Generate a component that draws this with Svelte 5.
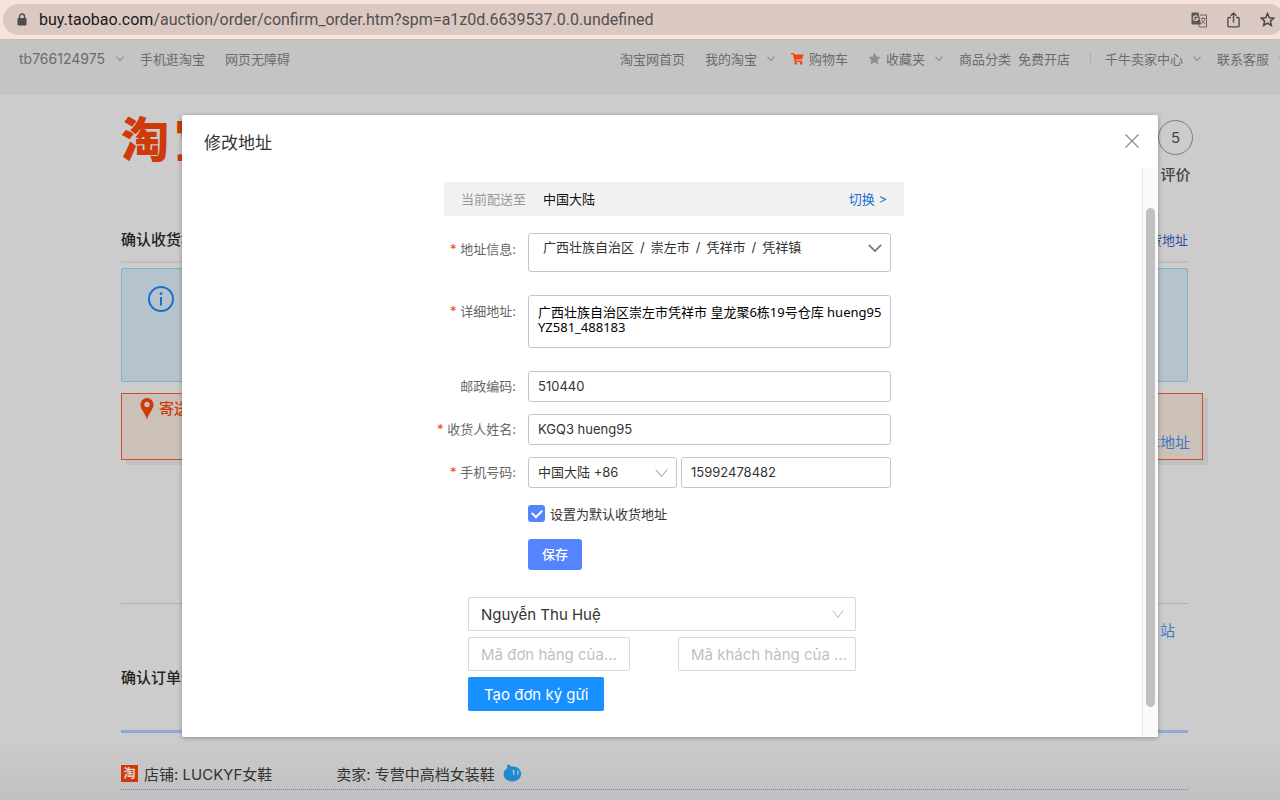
<script>
  let region = 'pingxiang';
  let detail = '广西壮族自治区崇左市凭祥市 皇龙聚6栋19号仓库 hueng95 YZ581_488183';
  let zip = '510440';
  let receiver = 'KGQ3 hueng95';
  let areaCode = '86';
  let phone = '15992478482';
  let isDefault = true;
  let staff = 'hue';
  let orderCode = '';
  let customerCode = '';

  let open = true;

  const accountLinks = [
    { label: 'tb766124975', menu: true, account: true },
    { label: '手机逛淘宝' },
    { label: '网页无障碍' }
  ];

  const siteLinks = [
    { label: '淘宝网首页' },
    { label: '我的淘宝', menu: true },
    { label: '购物车', icon: 'cart' },
    { label: '收藏夹', icon: 'star', menu: true },
    { label: '商品分类' },
    { label: '免费开店', tight: true },
    { label: '千牛卖家中心', menu: true, divider: true },
    { label: '联系客服', menu: true }
  ];
</script>

{#snippet chevron(cls)}
  <svg class={cls} viewBox="0 0 16 9" preserveAspectRatio="none" fill="none" stroke="currentColor" aria-hidden="true">
    <path d="M1 1l7 7 7-7" />
  </svg>
{/snippet}

{#snippet navItem(item)}
  {#if item.divider}<i class="divider"></i>{/if}
  <a href="#nav" class:tight={item.tight} class:account={item.account}>
    {#if item.icon === 'cart'}
      <svg class="cart" viewBox="0 0 13 13" aria-hidden="true">
        <path d="M0 1h2.800l.6 1.600H12.500l-1.400 5H4.600l.3 1.100h6.400v1.300H3.700L1.900 2.300H0z" fill="#f4430c" />
        <circle cx="4.700" cy="11.400" r="1.300" fill="#f4430c" />
        <circle cx="10.200" cy="11.400" r="1.300" fill="#f4430c" />
      </svg>
    {:else if item.icon === 'star'}
      <svg class="fav" viewBox="0 0 13 13" aria-hidden="true">
        <path d="M6.500.5l1.900 4 4.300.6-3.100 3 .8 4.300-3.900-2.100-3.900 2.100.8-4.300-3.100-3 4.300-.6z" fill="#8f8f8f" />
      </svg>
    {/if}
    {item.label}
    {#if item.menu}{@render chevron('nav-chevron')}{/if}
  </a>
{/snippet}

<div class="page">
  <div class="browser">
    <div class="address-bar">
      <svg class="lock" viewBox="0 0 10 13" aria-hidden="true">
        <path d="M2.500 6V3.500a2.500 2.500 0 0 1 5 0V6" fill="none" stroke="#4b4b50" stroke-width="1.400" />
        <rect x=".5" y="5" width="9" height="7.500" rx="1.200" fill="#4b4b50" />
      </svg>
      <span class="url"><b>buy.taobao.com</b>/auction/order/confirm_order.htm?spm=a1z0d.6639537.0.0.undefined</span>
      <span class="tools">
        <svg width="16" height="16" viewBox="0 0 16 16" fill="none" aria-hidden="true">
          <path d="M9 3h6.500v12H8.500l-1-3" stroke="#6a6260" />
          <path d="M1 .5h6.500L10 12.500H1A1 1 0 0 1 .5 12V1A1 1 0 0 1 1 .5z" fill="#5d5756" />
          <path d="M6.600 4.700A2.300 2.300 0 1 0 7 6.600H5" stroke="#ddcdc7" stroke-width="1.200" />
          <path d="M9.800 6.500h4.700M12 5.300v1.200M13.700 6.700c-.4 2.400-1.600 4-3.400 5M10.500 7.500c.6 1.900 1.900 3.200 3.700 4" stroke="#6a6260" stroke-width=".9" />
        </svg>
        <svg width="13" height="16" viewBox="0 0 13 16" fill="none" stroke="#504a49" stroke-width="1.400" stroke-linejoin="round" aria-hidden="true">
          <path d="M4 5.500H2A1.200 1.200 0 0 0 .9 6.700v7A1.200 1.200 0 0 0 2 14.900h9a1.200 1.200 0 0 0 1.100-1.200v-7A1.200 1.200 0 0 0 11 5.500H9M6.500 10.500V1.200M3.600 3.800l2.900-2.900 2.900 2.900" />
        </svg>
        <svg width="15" height="15" viewBox="0 0 15 15" fill="none" stroke="#4a4444" stroke-width="1.500" aria-hidden="true">
          <path d="M7.500 1.500l1.800 4.200 4.500.4-3.400 3 1 4.400-3.900-2.300-3.900 2.300 1-4.400-3.400-3 4.500-.4z" />
        </svg>
      </span>
    </div>
  </div>

  <nav class="site-nav">
    <div class="nav-group">
      {#each accountLinks as item}{@render navItem(item)}{/each}
    </div>
    <div class="nav-group site">
      {#each siteLinks as item}{@render navItem(item)}{/each}
    </div>
  </nav>

  <main>
    <header class="masthead">
      <div class="logo"><span>淘</span><span>宝</span></div>
      <div class="step">
        <span class="step-no">5</span>
        <span>评价</span>
      </div>
    </header>

    <div class="section-head">
      <h2>确认收货地址</h2>
      <a href="#manage">管理收货地址</a>
    </div>

    <div class="notice">
      <svg width="28" height="28" viewBox="0 0 28 28" fill="none" aria-hidden="true">
        <circle cx="14" cy="14" r="12" stroke="#1a6fd0" stroke-width="2" />
        <circle cx="14" cy="8.700" r="1.400" fill="#1a6fd0" />
        <path d="M14 12v8.500" stroke="#1a6fd0" stroke-width="2" />
      </svg>
    </div>

    <div class="ship-to">
      <div class="ship-label">
        <svg width="14" height="22" viewBox="0 0 14 22" aria-hidden="true">
          <path fill="#cf3a0a" fill-rule="evenodd" d="M7 0a6.600 6.600 0 0 1 6.600 6.600C13.600 11 9 15 7 21.500 5 15 .4 11 .4 6.600A6.600 6.600 0 0 1 7 0zm0 3.800a2.700 2.700 0 1 0 0 5.400 2.700 2.700 0 0 0 0-5.400z" />
        </svg>
        寄送至
      </div>
      <a href="#edit">修改本地址</a>
    </div>

    <div class="station"><a href="#station">站</a></div>

    <h2 class="order-head">确认订单信息</h2>

    <div class="shop">
      <span class="badge">淘</span>
      <span class="shop-name">店铺: LUCKYF女鞋</span>
      <span>卖家: 专营中高档女装鞋</span>
      <svg class="wangwang" width="19" height="18" viewBox="0 0 19 18" aria-hidden="true">
        <path d="M4.500.5c1.600.3 2.900 1 4 2 5-.7 9.700 2.600 9.700 7.300 0 4.400-3.900 7.700-8.900 7.700S.6 14.300.6 10.300c0-2.700 1.400-4.800 3.700-6.200C4 3 4 1.500 4.500.5z" fill="#2389cf" />
        <path d="M9.500 7l1.200-.3v4.200M14.400 6.800c1 .9 1 2.700 0 3.700" fill="none" stroke="#a9cbe0" stroke-width="1.300" />
      </svg>
    </div>
  </main>
</div>

{#if open}
  <div class="modal" role="dialog" aria-modal="true" aria-labelledby="modal-title">
    <header class="modal-head">
      <h1 id="modal-title">修改地址</h1>
      <button type="button" class="close" aria-label="关闭" on:click={() => (open = false)}>
        <svg width="14" height="14" viewBox="0 0 14 14" stroke="#8c8c8c" stroke-width="1.200" aria-hidden="true">
          <path d="M.5.5l13 13M13.500.5l-13 13" />
        </svg>
      </button>
    </header>

    <div class="modal-body">
      <div class="modal-content">
        <form class="address" on:submit|preventDefault>
          <div class="current">
            <span class="muted">当前配送至</span>
            <span>中国大陆</span>
            <a href="#switch">切换 &gt;</a>
          </div>

          <div class="row region">
            <label for="region" class="required">地址信息:</label>
            <div class="select-wrap">
              <select id="region" bind:value={region}>
                <option value="pingxiang">广西壮族自治区&nbsp;&thinsp;/&nbsp;&thinsp;崇左市&nbsp;&thinsp;/&nbsp;&thinsp;凭祥市&nbsp;&thinsp;/&nbsp;&thinsp;凭祥镇</option>
              </select>
              {@render chevron('region-chevron')}
            </div>
          </div>

          <div class="row detail">
            <label for="detail" class="required">详细地址:</label>
            <textarea id="detail" rows="2" spellcheck="false" bind:value={detail}></textarea>
          </div>

          <div class="row">
            <label for="zip">邮政编码:</label>
            <input id="zip" type="text" bind:value={zip} />
          </div>

          <div class="row">
            <label for="receiver" class="required">收货人姓名:</label>
            <input id="receiver" type="text" spellcheck="false" bind:value={receiver} />
          </div>

          <div class="row">
            <label for="phone" class="required">手机号码:</label>
            <div class="phone">
              <div class="select-wrap">
                <select aria-label="国家区号" bind:value={areaCode}>
                  <option value="86">中国大陆 +86</option>
                </select>
                {@render chevron('code-chevron')}
              </div>
              <input id="phone" type="text" bind:value={phone} />
            </div>
          </div>

          <label class="default">
            <input type="checkbox" bind:checked={isDefault} />
            设置为默认收货地址
          </label>

          <button type="submit" class="save">保存</button>
        </form>

        <form class="consign" on:submit|preventDefault>
          <div class="select-wrap">
            <select aria-label="Nhân viên" bind:value={staff}>
              <option value="hue">Nguyễn Thu Huệ</option>
            </select>
            {@render chevron('staff-chevron')}
          </div>
          <div class="codes">
            <input class="order-code" type="text" aria-label="Mã đơn hàng" placeholder="Mã đơn hàng của..." bind:value={orderCode} />
            <input class="customer-code" type="text" aria-label="Mã khách hàng" placeholder="Mã khách hàng của ..." bind:value={customerCode} />
          </div>
          <button type="submit">Tạo đơn ký gửi</button>
        </form>
      </div>

      <div class="scrollbar"><div class="thumb"></div></div>
    </div>
  </div>
{/if}

<style>
  :global(body) {
    background: #ccc;
    overflow: hidden;
    font-family: Inter, 'Noto Sans CJK SC', sans-serif;
    font-size: 13px;
    color: #333;
  }

  * { box-sizing: border-box; }
  a { color: inherit; text-decoration: none; }
  h1, h2 { margin: 0; }
  svg { display: block; flex: none; }

  .page {
    min-height: 100vh;
    background: linear-gradient(#ccc, #ccc calc(100vh - 60px), #c0c0c0 100vh);
  }

  /* browser chrome */
  .browser {
    height: 40px;
    padding: 4px 0 0 3px;
    background: #f8e3db;
    border-bottom: 1px solid #cfb9b2;
    overflow: hidden;
  }
  .address-bar {
    display: flex;
    align-items: center;
    height: 31px;
    margin-right: -4px;
    padding: 0 9px 0 14px;
    border-radius: 16px;
    background: #dac9c2;
  }
  .lock { width: 10px; height: 13px; }
  .url {
    margin-left: 12px;
    font-family: Roboto, sans-serif;
    font-size: 16px;
    color: #544e4d;
    white-space: nowrap;
  }
  .url b { font-weight: 400; color: #1c1a1a; }
  .tools {
    display: flex;
    align-items: center;
    gap: 20px;
    margin-left: auto;
  }

  /* site navigation */
  .site-nav {
    display: flex;
    justify-content: space-between;
    height: 54px;
    padding-left: 19px;
    background: #c4c4c4;
    border-bottom: 1px solid #bcbcbc;
    overflow: hidden;
    color: #6c6c6c;
    white-space: nowrap;
  }
  .nav-group {
    display: flex;
    align-items: center;
    gap: 20px;
    height: 36px;
  }
  .nav-group.site { margin-right: -3px; }
  .nav-group a {
    display: flex;
    align-items: center;
    gap: 10px;
  }
  .nav-group a.account { gap: 11px; font-size: 14px; }
  .nav-group a:has(.nav-chevron) { margin-right: -4px; }
  .nav-group a:has(.cart), .nav-group a:has(.fav) { column-gap: 5px; }
  .nav-group a.tight { margin-left: -13px; }
  .nav-chevron { width: 8px; height: 5px; stroke-width: 2; color: #8f8f8f; }
  .fav ~ .nav-chevron { margin-left: 5px; }
  .cart, .fav { width: 13px; height: 13px; }
  .divider {
    width: 1px;
    height: 12px;
    margin-right: -6px;
    background: #b0b0b0;
  }

  /* order page behind the dialog */
  main { padding: 0 92px 0 121px; }
  .masthead {
    display: flex;
    justify-content: space-between;
    align-items: flex-start;
    height: 132px;
    padding-top: 26px;
  }
  .logo {
    display: flex;
    gap: 5px;
    font-size: 48px;
    font-weight: 900;
    line-height: 40px;
    color: #cf3a0a;
  }
  .step {
    display: flex;
    flex-direction: column;
    align-items: center;
    gap: 8px;
    margin-right: -5px;
    font-size: 15px;
    font-weight: 500;
    color: #444;
  }
  .step-no {
    display: grid;
    place-items: center;
    width: 35px;
    height: 35px;
    border: 1px solid #7b7b86;
    border-radius: 50%;
    font-weight: 400;
  }
  .section-head {
    display: flex;
    justify-content: space-between;
    align-items: center;
    height: 37px;
    padding-bottom: 8px;
    border-bottom: 2px solid #bfbfbf;
  }
  .section-head h2, .order-head {
    font-size: 15px;
    font-weight: 500;
    line-height: 22px;
    color: #222;
  }
  .section-head a { color: #2f4fa3; }
  .notice {
    height: 114px;
    margin-top: 5px;
    padding: 16px 25px;
    border: 1px solid #7fb1cf;
    border-radius: 2px;
    background: #b5c4cc;
  }
  .ship-to {
    display: flex;
    justify-content: space-between;
    height: 67px;
    margin: 11px -15px 0 0;
    padding: 4px 12px 5px 18px;
    border: 1px solid #d6492b;
    background: #ccc1b9;
    box-shadow: 5px 5px 0 #c0c0c0;
    font-size: 15px;
    line-height: 22px;
  }
  .ship-label {
    display: flex;
    align-items: flex-start;
    gap: 5px;
    font-weight: 500;
    color: #cf3a0a;
  }
  .ship-to a { align-self: flex-end; color: #3d7bc4; }
  .station {
    margin-top: 143px;
    padding: 16px 13px 0 0;
    border-top: 1px solid #b0b0b0;
    text-align: right;
    font-size: 15px;
    line-height: 22px;
    color: #3d7bc4;
  }
  .order-head {
    margin-top: 25px;
    padding-bottom: 41px;
    border-bottom: 3px solid #8fa9d6;
  }
  .shop {
    display: flex;
    align-items: center;
    height: 57px;
    padding-top: 24px;
    border-bottom: 1px dotted #5f7fd0;
    font-size: 15px;
    white-space: nowrap;
  }
  .badge {
    display: grid;
    place-items: center;
    width: 17px;
    height: 17px;
    margin-right: 6px;
    background: #cf3a0a;
    color: #e8d6d0;
    font-size: 12px;
    font-weight: 700;
    line-height: 17px;
  }
  .shop-name { margin-right: 64px; }
  .wangwang { margin-left: 8px; }

  /* dialog */
  .modal {
    position: absolute;
    top: 115px;
    left: 182px;
    right: 122px;
    border-radius: 2px;
    background: #fff;
    box-shadow: 0 1px 5px rgba(0, 0, 0, 0.3);
    overflow: hidden;
  }
  .modal-head {
    display: flex;
    justify-content: space-between;
    align-items: center;
    height: 53px;
    padding: 0 19px 1px 22px;
  }
  h1 { font-size: 17px; font-weight: 400; color: #333; }
  .close {
    padding: 0;
    border: 0;
    background: none;
    cursor: pointer;
  }
  .modal-body { display: flex; }
  .modal-content { flex: 1; padding: 14px 0 26px; }
  .scrollbar {
    width: 16px;
    padding: 40px 3px 30px;
    border-left: 1px solid #e8e8e8;
    background: #fafafa;
  }
  .thumb { height: 100%; border-radius: 5px; background: #c1c1c1; }

  .address {
    width: 484px;
    margin: 0 auto;
    padding-left: 24px;
  }
  .current {
    display: flex;
    align-items: center;
    gap: 17px;
    height: 34px;
    margin-bottom: 17px;
    padding: 0 17px 1px;
    background: #f1f1f1;
    color: #111;
  }
  .current .muted { color: #999; }
  .current a { margin-left: auto; color: #1a6fd6; }

  .row {
    display: grid;
    grid-template-columns: 72px 1fr;
    gap: 12px;
    align-items: center;
    margin: 0 13px 12px 0;
  }
  .row label {
    justify-self: end;
    padding-bottom: 2px;
    color: #666;
    white-space: nowrap;
  }
  .required::before { content: '* '; color: #f4430c; }

  input, select, textarea, button { font: inherit; margin: 0; }
  input[type='text'], select, textarea {
    display: block;
    width: 100%;
    height: 31px;
    padding: 0 9px 1px;
    border: 1px solid #c4c6cf;
    border-radius: 3px;
    background: #fff;
    color: #333;
    outline: none;
  }
  select { appearance: none; }
  .select-wrap { position: relative; }
  .select-wrap :global(svg) {
    position: absolute;
    right: 9px;
    top: 50%;
    transform: translateY(-50%);
    color: #888;
    pointer-events: none;
  }
  .row.region, .row.detail { align-items: start; margin-bottom: 23px; }
  .region label, .detail label { padding-top: 6px; }
  .region select { height: 39px; padding: 0 14px 12px; }
  .region-chevron { width: 14px; height: 8px; stroke-width: 2; }
  .select-wrap :global(.region-chevron) { top: 15px; color: #777; }
  .code-chevron { width: 13px; height: 9px; stroke-width: 1; }
  .staff-chevron { width: 12px; height: 9px; stroke-width: 1; }

  textarea {
    height: 53px;
    padding: 9px 2px 9px 9px;
    font-family: 'Noto Sans', 'Noto Sans CJK SC', sans-serif;
    line-height: 15px;
    color: #000;
    resize: none;
    overflow: hidden;
  }

  .phone {
    display: grid;
    grid-template-columns: 149px 1fr;
    gap: 4px;
  }

  .default {
    display: flex;
    align-items: center;
    gap: 5px;
    margin: 16px 0 16px 84px;
  }
  .default input {
    appearance: none;
    width: 17px;
    height: 17px;
    border-radius: 3px;
    background: #5584ff;
    display: grid;
    place-items: center;
  }
  .default input:checked::before {
    content: '';
    width: 8px;
    height: 5px;
    border: solid #fff;
    border-width: 0 0 2px 2px;
    transform: translateY(-1px) rotate(-45deg);
  }
  .save {
    display: block;
    width: 54px;
    height: 31px;
    margin-left: 84px;
    padding: 0 0 2px;
    border: 0;
    border-radius: 3px;
    background: #5584ff;
    color: #fff;
    font-weight: 500;
  }

  .consign {
    display: flex;
    flex-direction: column;
    gap: 6px;
    width: 388px;
    margin: 27px auto 0;
    font-size: 15px;
  }
  .consign input[type='text'], .consign select {
    height: 34px;
    padding: 0 8px 0 12px;
    border-color: #d9d9d9;
    border-radius: 2px;
  }
  .consign .select-wrap :global(svg) { right: 12px; color: #aaa; }
  .codes { display: flex; justify-content: space-between; }
  .codes .order-code { width: 162px; }
  .codes .customer-code { width: 178px; }
  .codes input::placeholder { color: #bfbfbf; }
  .consign button {
    align-self: flex-start;
    height: 34px;
    padding: 0 16px;
    border: 0;
    border-radius: 2px;
    background: #1890ff;
    color: #fff;
  }
</style>
